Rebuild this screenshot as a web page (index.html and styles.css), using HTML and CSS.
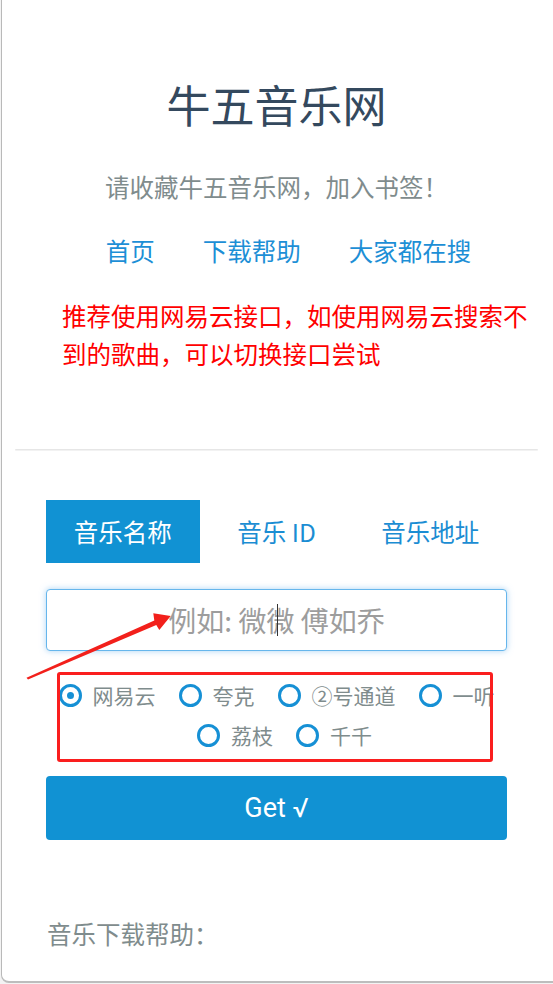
FILE: index.html
```html
<!DOCTYPE html>
<html lang="zh-CN">
<head>
<meta charset="utf-8">
<title>牛五音乐网</title>
<link rel="stylesheet" href="styles.css">
</head>
<body>
<div class="card">
  <div class="inner">
    <header class="hero">
      <h1 class="title">牛五音乐网</h1>
      <p class="subtitle">请收藏牛五音乐网，加入书签！</p>
      <nav class="nav">
        <a class="nav-link" href="#">首页</a>
        <a class="nav-link" href="#">下载帮助</a>
        <a class="nav-link" href="#">大家都在搜</a>
      </nav>
      <p class="notice">推荐使用网易云接口，如使用网易云搜索不到的歌曲，可以切换接口尝试</p>
    </header>
    <div class="divider"></div>
    <section class="form">
      <div class="tabs">
        <div class="tab active">音乐名称</div>
        <div class="tab">音乐 ID</div>
        <div class="tab">音乐地址</div>
      </div>
      <div class="field">
        <input class="search" type="text" placeholder="例如: 微微 傅如乔">
        <span class="caret"></span>
      </div>
      <div class="radios">
        <div class="radio-row">
          <label class="radio"><span class="dot checked"></span><span class="radio-text">网易云</span></label>
          <label class="radio"><span class="dot"></span><span class="radio-text">夸克</span></label>
          <label class="radio"><span class="dot"></span><span class="radio-text">②号通道</span></label>
          <label class="radio"><span class="dot"></span><span class="radio-text">一听</span></label>
        </div>
        <div class="radio-row second">
          <label class="radio"><span class="dot"></span><span class="radio-text">荔枝</span></label>
          <label class="radio"><span class="dot"></span><span class="radio-text">千千</span></label>
        </div>
      </div>
      <button class="get" type="button">Get √</button>
    </section>
    <p class="help">音乐下载帮助：</p>
  </div>
  <div class="annot-box"></div>
  <svg class="annot-arrow" viewBox="20 600 160 85" width="160" height="85">
    <polygon points="26.5,677.8 154.3,620.6 153.3,613.3 170.7,616 159.3,630 156.3,625 28,679.6" fill="#f2201b"/>
  </svg>
</div>
</body>
</html>
```

FILE: styles.css
```css
html, body {
  margin: 0;
  padding: 0;
  overflow: hidden;
  background: #f3f3f3;
}

body {
  font-family: "Noto Sans CJK SC", Roboto, sans-serif;
}

.card {
  position: relative;
  width: 558px;
  margin-left: 1px;
  background: #ffffff;
  border-left: 1px solid #b9b9b9;
  border-bottom: 2px solid #bdbdbd;
  border-bottom-left-radius: 8px;
  padding-top: 78px;
  padding-bottom: 30px;
}

.inner {
  width: 523px;
  padding-left: 13px;
}

.hero {
  text-align: center;
}

.title {
  margin: 0;
  font-size: 44px;
  line-height: 52px;
  font-weight: 400;
  color: #34495e;
}

.subtitle {
  margin: 40px 0 0;
  font-size: 24.5px;
  line-height: 34px;
  color: #7f8c8d;
}

.nav {
  margin-top: 30px;
  display: flex;
  justify-content: center;
  gap: 48px;
  padding-left: 24px;
  font-size: 24.5px;
  line-height: 34px;
}

.nav-link {
  color: #1d8fd6;
  text-decoration: none;
}

.notice {
  margin: 29px 0 0;
  padding-left: 47px;
  text-align: left;
  font-size: 24.5px;
  line-height: 38px;
  color: #ff0000;
}

.divider {
  margin-top: 76px;
  height: 0;
  border-top: 1px solid #e6e6e6;
  border-bottom: 1px solid #f2f2f2;
  border-radius: 1px;
}

.form {
  margin: 49px 31px 0;
}

.tabs {
  display: grid;
  grid-template-columns: 1fr 1fr 1fr;
}

.tab {
  height: 63px;
  line-height: 63px;
  text-align: center;
  font-size: 24.5px;
  color: #1b8dd3;
}

.tab.active {
  background: #1192d3;
  color: #ffffff;
}

.field {
  position: relative;
  margin-top: 26px;
}

.search {
  display: block;
  box-sizing: border-box;
  width: 100%;
  height: 62px;
  margin: 0;
  padding: 0 12px;
  border: 1px solid #66b6ec;
  border-radius: 4px;
  box-shadow: 0 0 6px rgba(102, 175, 233, 0.55);
  outline: none;
  text-align: center;
  font-family: "Noto Sans CJK SC", Roboto, sans-serif;
  font-size: 28px;
  color: #555;
  background: #fff;
}

.search::placeholder {
  color: #9d9d9d;
}

.caret {
  position: absolute;
  left: 231px;
  top: 15px;
  width: 1px;
  height: 32px;
  background: #333;
}

.radios {
  margin-top: 30px;
  display: flex;
  flex-direction: column;
  gap: 12px;
}

.radio-row {
  display: flex;
  justify-content: center;
  column-gap: 23px;
}

.radio-row.second {
  padding-left: 16px;
}

.radio {
  display: flex;
  align-items: center;
  gap: 11px;
  height: 28px;
  font-size: 21px;
  color: #7f8c8d;
}

.dot {
  box-sizing: border-box;
  width: 23px;
  height: 23px;
  border: 3px solid #1690d5;
  border-radius: 50%;
  display: flex;
  align-items: center;
  justify-content: center;
}

.dot.checked::after {
  content: "";
  width: 7px;
  height: 7px;
  border-radius: 50%;
  background: #1690d5;
}

.get {
  display: block;
  width: 100%;
  height: 64px;
  margin-top: 27px;
  border: 0;
  border-radius: 4px;
  background: #1192d3;
  color: #ffffff;
  font-family: Roboto, "DejaVu Sans", sans-serif;
  font-size: 27px;
}

.help {
  margin: 77px 0 0;
  padding-left: 32px;
  font-size: 24.5px;
  line-height: 34px;
  color: #7f8c8d;
}

.annot-box {
  position: absolute;
  left: 55px;
  top: 672px;
  box-sizing: border-box;
  width: 436px;
  height: 90px;
  border: 3px solid #fa1e1e;
  border-radius: 3px;
}

.annot-arrow {
  position: absolute;
  left: 18px;
  top: 600px;
}
```
